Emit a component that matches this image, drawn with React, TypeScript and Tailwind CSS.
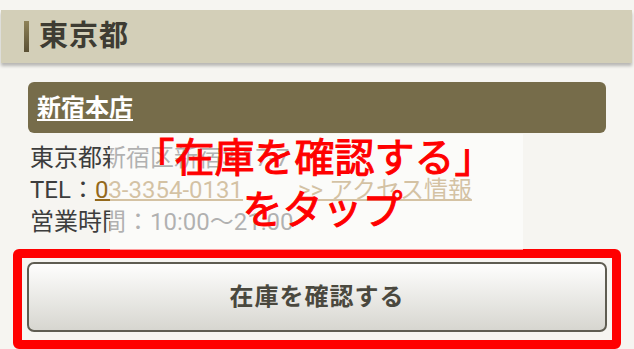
export default function App() {
  return (
    <div
      className="relative w-[634px] h-[349px] overflow-hidden bg-[#f6f5f1]"
      style={{ fontFamily: 'Roboto, "Noto Sans CJK JP", sans-serif' }}
    >
      {/* Prefecture header */}
      <div className="mt-[10px] ml-[1px] mr-[2px] h-[53px] bg-[#d3cfb8] shadow-[0_3px_3px_rgba(0,0,0,0.25)] flex items-center pl-[23px] gap-[10px]">
        <div className="w-[5px] h-[31px] bg-gradient-to-b from-[#8f8358] to-[#5a5034]" />
        <h2 className="text-[29px] font-bold tracking-[1px] text-[#3e3c33] leading-none">東京都</h2>
      </div>

      {/* Store block */}
      <div className="px-[28px] mt-[19px]">
        <div className="h-[51px] rounded-[6px] bg-[#766c4a] flex items-center px-[9px]">
          <a className="text-[24px] font-bold text-white underline underline-offset-[3px] decoration-[2px] leading-none">
            新宿本店
          </a>
        </div>

        <div className="pt-[9px] pl-[2px] text-[24px] leading-[32px] text-[#3d3d3d]">
          <p>東京都新宿区新宿3-17-7</p>
          <p>
            TEL：
            <a className="text-[#93681a] underline decoration-[2px]">03-3354-0131</a>
            <a className="ml-[55px] text-[#93681a] underline decoration-[2px]">&gt;&gt; アクセス情報</a>
          </p>
          <p>営業時間：10:00～21:00</p>
        </div>
      </div>

      {/* Button with red annotation frame */}
      <div className="mt-[11px] mx-[13px] h-[100px] border-[9px] border-[#ff0000] rounded-[6px] px-[5px] pt-[4px]">
        <button className="w-full h-[70px] rounded-[7px] border-2 border-[#5f5d52] bg-gradient-to-b from-[#fefefd] to-[#d7d6d0] text-[24px] font-bold text-[#4a483e] tracking-[1px]">
          在庫を確認する
        </button>
      </div>

      {/* Annotation overlay */}
      <div className="absolute left-[110px] top-[134px] w-[413px] h-[116px] bg-white/60 flex flex-col items-center">
        <p className="text-[40px] leading-[48px] text-[#ff0000] [-webkit-text-stroke:1px_#ff0000] -ml-[4px] mt-[1px]">「在庫を確認する」</p>
        <p className="text-[40px] leading-[56px] text-[#ff0000] [-webkit-text-stroke:1px_#ff0000] ml-[12px]">をタップ</p>
      </div>
    </div>
  );
}
